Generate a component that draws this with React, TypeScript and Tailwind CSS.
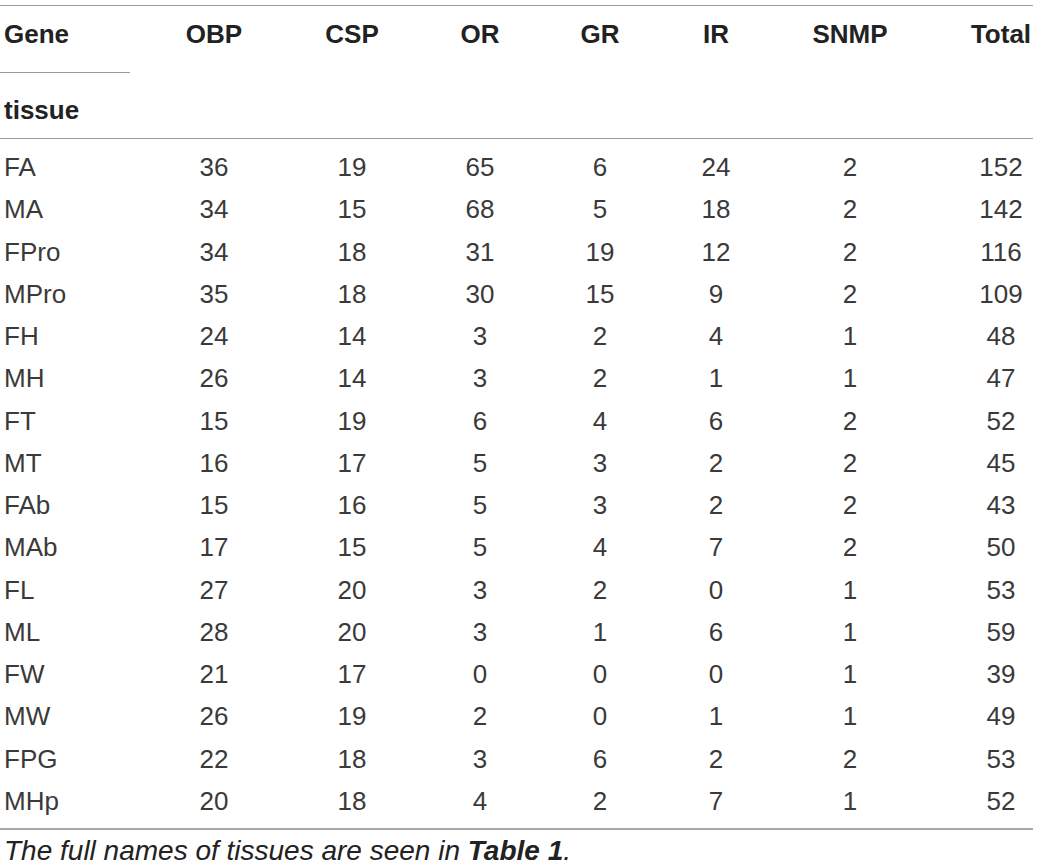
const columns = ["OBP", "CSP", "OR", "GR", "IR", "SNMP", "Total"];

const rows: [string, number[]][] = [
    ["FA", [36, 19, 65, 6, 24, 2, 152]],
    ["MA", [34, 15, 68, 5, 18, 2, 142]],
    ["FPro", [34, 18, 31, 19, 12, 2, 116]],
    ["MPro", [35, 18, 30, 15, 9, 2, 109]],
    ["FH", [24, 14, 3, 2, 4, 1, 48]],
    ["MH", [26, 14, 3, 2, 1, 1, 47]],
    ["FT", [15, 19, 6, 4, 6, 2, 52]],
    ["MT", [16, 17, 5, 3, 2, 2, 45]],
    ["FAb", [15, 16, 5, 3, 2, 2, 43]],
    ["MAb", [17, 15, 5, 4, 7, 2, 50]],
    ["FL", [27, 20, 3, 2, 0, 1, 53]],
    ["ML", [28, 20, 3, 1, 6, 1, 59]],
    ["FW", [21, 17, 0, 0, 0, 1, 39]],
    ["MW", [26, 19, 2, 0, 1, 1, 49]],
    ["FPG", [22, 18, 3, 6, 2, 2, 53]],
    ["MHp", [20, 18, 4, 2, 7, 1, 52]],
];

const grid = "grid grid-cols-[145px_138px_138px_118px_122px_110px_158px_104px]";

export default function App() {
    return (
        <div className="bg-white min-h-screen pt-[5px] font-['Liberation_Sans',Arial,sans-serif]">
            <div className="w-[1033px]">
                <div className={`${grid} border-t border-[#9c9c9c] border-b pb-[13px]`}>
                    <div className="flex flex-col text-[26px] font-bold text-[#222]">
                        <span className="pl-1 leading-[30px] mt-[13px]">Gene</span>
                        <div className="mt-[23px] h-px w-[130px] bg-[#9c9c9c]" />
                        <span className="pl-1 leading-[30px] mt-[22px]">tissue</span>
                    </div>
                    {columns.map((c, i) => (
                        <span
                            key={c}
                            className={`text-center text-[26px] font-bold text-[#222] leading-[30px] mt-[13px] ${
                                i === columns.length - 1 ? "pl-[40px]" : ""
                            }`}
                        >
                            {c}
                        </span>
                    ))}
                </div>
                <div className="pt-[7px] pb-[6px] border-b-2 border-[#a8a8a8]">
                    {rows.map(([name, vals]) => (
                        <div key={name} className={`${grid} h-[42.27px] leading-[42px] text-[26px] text-[#3a3a3a]`}>
                            <span className="pl-1">{name}</span>
                            {vals.map((v, i) => (
                                <span
                                    key={i}
                                    className={`text-center ${i === vals.length - 1 ? "pl-[40px]" : ""}`}
                                >
                                    {v}
                                </span>
                            ))}
                        </div>
                    ))}
                </div>
                <p className="pl-1 pt-[6px] text-[28px] italic text-[#222] leading-[30px] whitespace-nowrap">
                    The full names of tissues are seen in <b>Table 1</b>.
                </p>
            </div>
        </div>
    );
}
